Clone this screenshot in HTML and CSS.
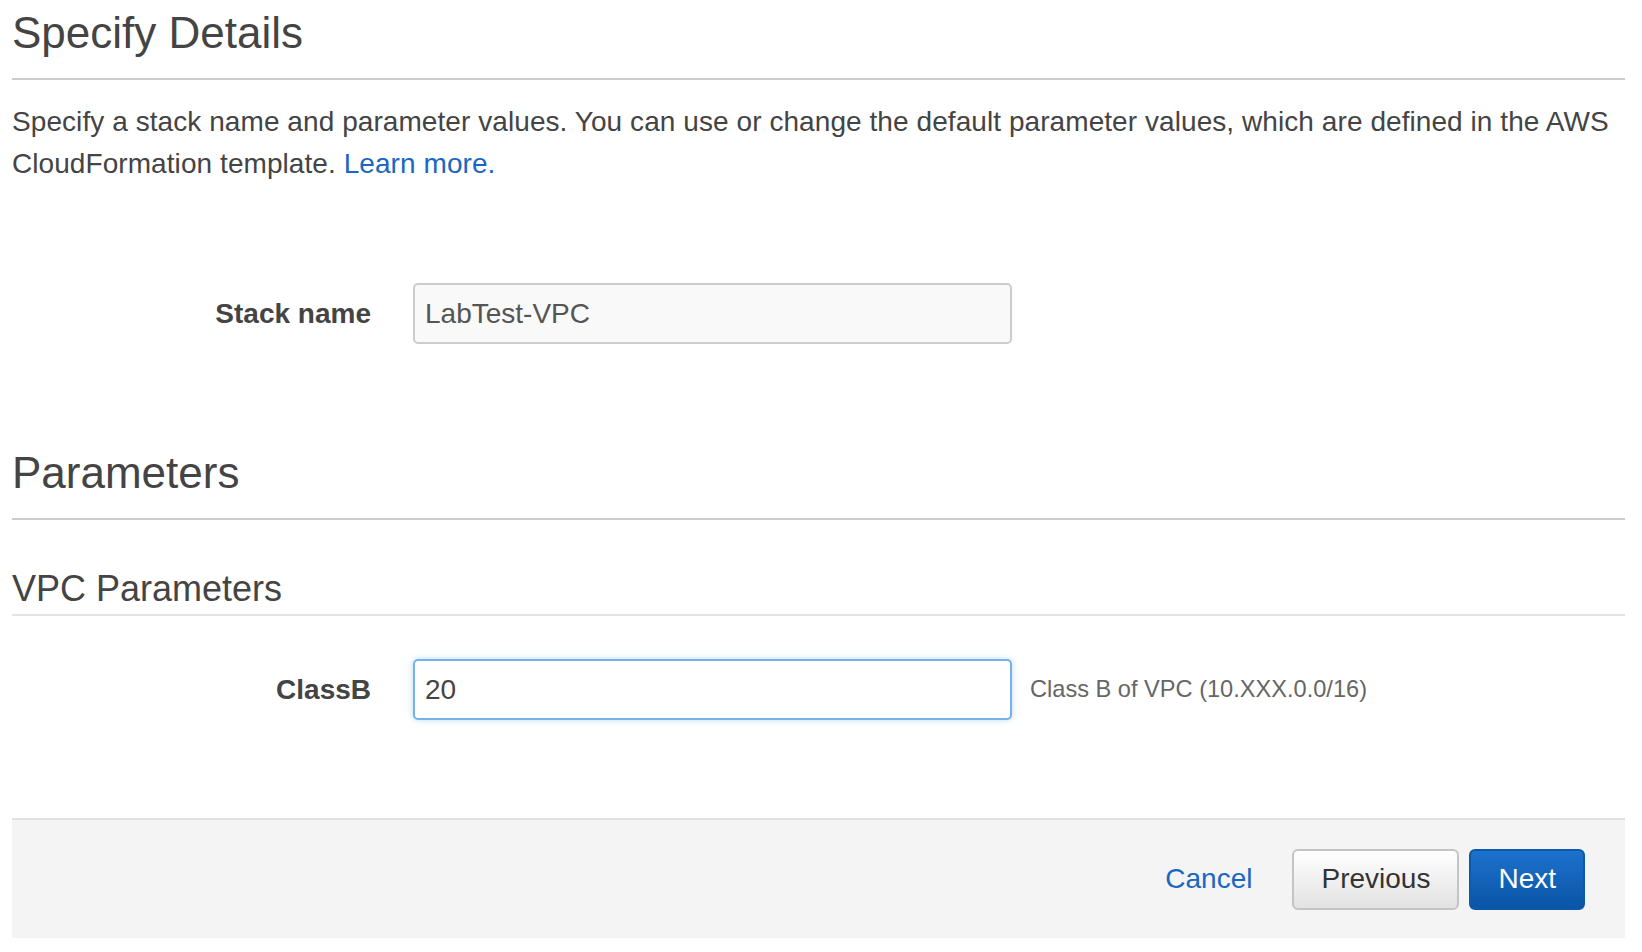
FILE: index.html
```html
<!DOCTYPE html>
<html lang="en">
<head>
<meta charset="utf-8">
<title>Specify Details</title>
<link rel="stylesheet" href="styles.css">
</head>
<body>
<div class="page">
  <div class="section-head">
    <h1 class="title">Specify Details</h1>
  </div>
  <p class="intro">Specify a stack name and parameter values. You can use or change the default parameter values, which are defined in the AWS CloudFormation template. <a class="link" href="#">Learn more.</a></p>

  <div class="form-row stack-row">
    <label class="label" for="stackname">Stack name</label>
    <input class="field readonly" id="stackname" type="text" value="LabTest-VPC">
  </div>

  <div class="section-head params-head">
    <h1 class="title">Parameters</h1>
  </div>
  <div class="sub-head">
    <h2 class="subtitle">VPC Parameters</h2>
  </div>

  <div class="form-row classb-row">
    <label class="label" for="classb">ClassB</label>
    <input class="field focused" id="classb" type="text" value="20">
    <span class="help">Class B of VPC (10.XXX.0.0/16)</span>
  </div>

  <div class="footer">
    <a class="cancel" href="#">Cancel</a>
    <button class="btn" type="button">Previous</button>
    <button class="btn primary" type="button">Next</button>
  </div>
</div>
</body>
</html>
```
FILE: styles.css
```css
* { box-sizing: border-box; }

html, body {
  margin: 0;
  padding: 0;
  background: #ffffff;
}

body {
  font-family: "Liberation Sans", Arial, Helvetica, sans-serif;
  color: #444444;
}

.page {
  padding: 0 17px 0 12px;
}

.section-head {
  border-bottom: 2px solid #cccccc;
  padding-bottom: 19px;
}

.title {
  margin: 0;
  padding-top: 7px;
  font-size: 44px;
  line-height: 52px;
  font-weight: normal;
  color: #444444;
}

.intro {
  margin: 21px 0 0 0;
  font-size: 28px;
  line-height: 42px;
  letter-spacing: 0.07px;
  color: #444444;
}

.link {
  color: #1a67c1;
  text-decoration: none;
}

.form-row {
  display: flex;
  align-items: center;
}

.stack-row {
  margin-top: 98px;
}

.label {
  width: 359px;
  text-align: right;
  font-size: 28px;
  line-height: 42px;
  font-weight: bold;
  color: #444444;
}

.field {
  margin-left: 42px;
  width: 599px;
  height: 61px;
  padding: 0 10px;
  font-family: "Liberation Sans", Arial, Helvetica, sans-serif;
  font-size: 28px;
  color: #555555;
  border: 2px solid #cccccc;
  border-radius: 5px;
  background: #ffffff;
  outline: none;
}

.field.readonly {
  background: #f9f9f9;
  color: #555555;
}

.field.focused {
  border-color: #74b2ea;
  box-shadow: 0 0 6px rgba(102, 175, 233, 0.45);
  color: #444444;
}

.help {
  margin-left: 18px;
  font-size: 23.6px;
  color: #666666;
}

.params-head {
  margin-top: 96px;
}

.sub-head {
  margin-top: 47px;
  border-bottom: 2px solid #e4e4e4;
  padding-bottom: 3px;
}

.subtitle {
  margin: 0;
  font-size: 36px;
  line-height: 44px;
  font-weight: normal;
  color: #444444;
}

.classb-row {
  margin-top: 43px;
}

.footer {
  margin-top: 98px;
  height: 120px;
  background: #f4f4f4;
  border-top: 2px solid #e1e1e1;
  display: flex;
  align-items: center;
  justify-content: flex-end;
  padding: 0 40px 0 0;
}

.cancel {
  font-size: 28px;
  color: #1a67c1;
  text-decoration: none;
  margin-right: 40px;
}

.btn {
  height: 61px;
  padding: 0 27px;
  font-family: "Liberation Sans", Arial, Helvetica, sans-serif;
  font-size: 28px;
  color: #333333;
  border: 2px solid #c4c4c4;
  border-radius: 6px;
  background: linear-gradient(#ffffff, #e2e2e2);
}

.btn.primary {
  margin-left: 10px;
  color: #ffffff;
  border-color: #0d58a8;
  background: linear-gradient(#1c71cd, #0a55a6);
}
```
